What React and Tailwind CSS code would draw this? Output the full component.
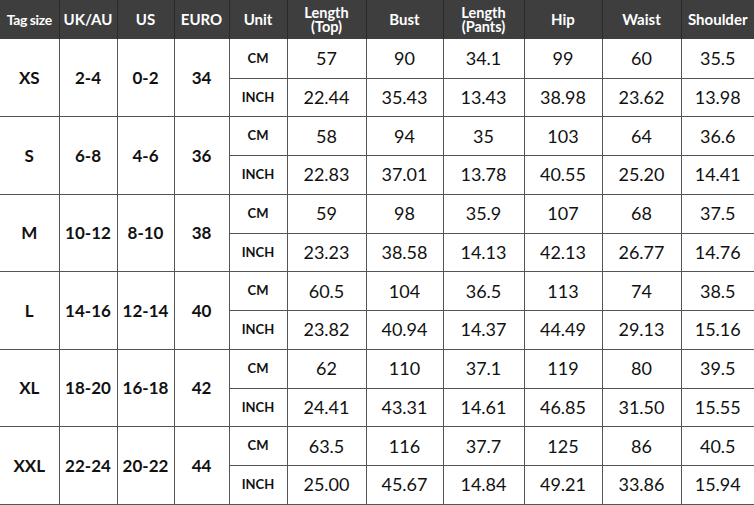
import React from "react";

const sizes = [
  { tag: "XS", uk: "2-4", us: "0-2", eu: "34", cm: ["57", "90", "34.1", "99", "60", "35.5"], inch: ["22.44", "35.43", "13.43", "38.98", "23.62", "13.98"] },
  { tag: "S", uk: "6-8", us: "4-6", eu: "36", cm: ["58", "94", "35", "103", "64", "36.6"], inch: ["22.83", "37.01", "13.78", "40.55", "25.20", "14.41"] },
  { tag: "M", uk: "10-12", us: "8-10", eu: "38", cm: ["59", "98", "35.9", "107", "68", "37.5"], inch: ["23.23", "38.58", "14.13", "42.13", "26.77", "14.76"] },
  { tag: "L", uk: "14-16", us: "12-14", eu: "40", cm: ["60.5", "104", "36.5", "113", "74", "38.5"], inch: ["23.82", "40.94", "14.37", "44.49", "29.13", "15.16"] },
  { tag: "XL", uk: "18-20", us: "16-18", eu: "42", cm: ["62", "110", "37.1", "119", "80", "39.5"], inch: ["24.41", "43.31", "14.61", "46.85", "31.50", "15.55"] },
  { tag: "XXL", uk: "22-24", us: "20-22", eu: "44", cm: ["63.5", "116", "37.7", "125", "86", "40.5"], inch: ["25.00", "45.67", "14.84", "49.21", "33.86", "15.94"] },
];

const widths = [59, 58, 57, 55, 58, 79, 77, 81, 78, 79, 73];

const headers = [
  "Tag size",
  "UK/AU",
  "US",
  "EURO",
  "Unit",
  ["Length", "(Top)"],
  "Bust",
  ["Length", "(Pants)"],
  "Hip",
  "Waist",
  "Shoulder",
];

export default function App() {
  return (
    <div className="w-[754px] h-[505px] bg-white overflow-hidden font-['Lato',sans-serif] text-[#111]">
      <table className="border-collapse table-fixed w-[754px]">
        <colgroup>
          {widths.map((w, i) => (
            <col key={i} style={{ width: w }} />
          ))}
        </colgroup>
        <thead>
          <tr className="h-[39px] bg-[#3e3e3e] text-white">
            {headers.map((h, i) => (
              <th
                key={i}
                className={`p-0 font-bold text-center border-[#2a2a2a] ${i === 0 ? "" : "border-l"} ${
                  i === 0 ? "text-[14px] tracking-[-0.4px]" : "text-[15px]"
                }`}
              >
                {Array.isArray(h) ? (
                  <div className="flex flex-col items-center">
                    <span className="leading-[16px] text-[14.5px]">{h[0]}</span>
                    <span className="leading-[16px] text-[14.5px] -mt-[2px]">{h[1]}</span>
                  </div>
                ) : (
                  h
                )}
              </th>
            ))}
          </tr>
        </thead>
        <tbody>
          {sizes.map((s) => (
            <React.Fragment key={s.tag}>
              <tr className="h-[39px]">
                <td rowSpan={2} className="p-0 text-center font-bold text-[17px] border-b border-[#555]">
                  {s.tag}
                </td>
                <td rowSpan={2} className="p-0 text-center font-bold text-[17px] border-l border-b border-[#555]">
                  {s.uk}
                </td>
                <td rowSpan={2} className="p-0 text-center font-bold text-[17px] border-l border-b border-[#555]">
                  {s.us}
                </td>
                <td rowSpan={2} className="p-0 text-center font-bold text-[17px] border-l border-b border-[#555]">
                  {s.eu}
                </td>
                <td className="p-0 text-center font-bold text-[13px] border-l border-b border-[#555]">CM</td>
                {s.cm.map((v, i) => (
                  <td key={i} className="p-0 text-center font-normal text-[18px] border-l border-b border-[#555]">
                    {v}
                  </td>
                ))}
              </tr>
              <tr className="h-[38.5px]">
                <td className="p-0 text-center font-bold text-[13px] border-l border-b border-[#555]">INCH</td>
                {s.inch.map((v, i) => (
                  <td key={i} className="p-0 text-center font-normal text-[18px] border-l border-b border-[#555]">
                    {v}
                  </td>
                ))}
              </tr>
            </React.Fragment>
          ))}
        </tbody>
      </table>
    </div>
  );
}
